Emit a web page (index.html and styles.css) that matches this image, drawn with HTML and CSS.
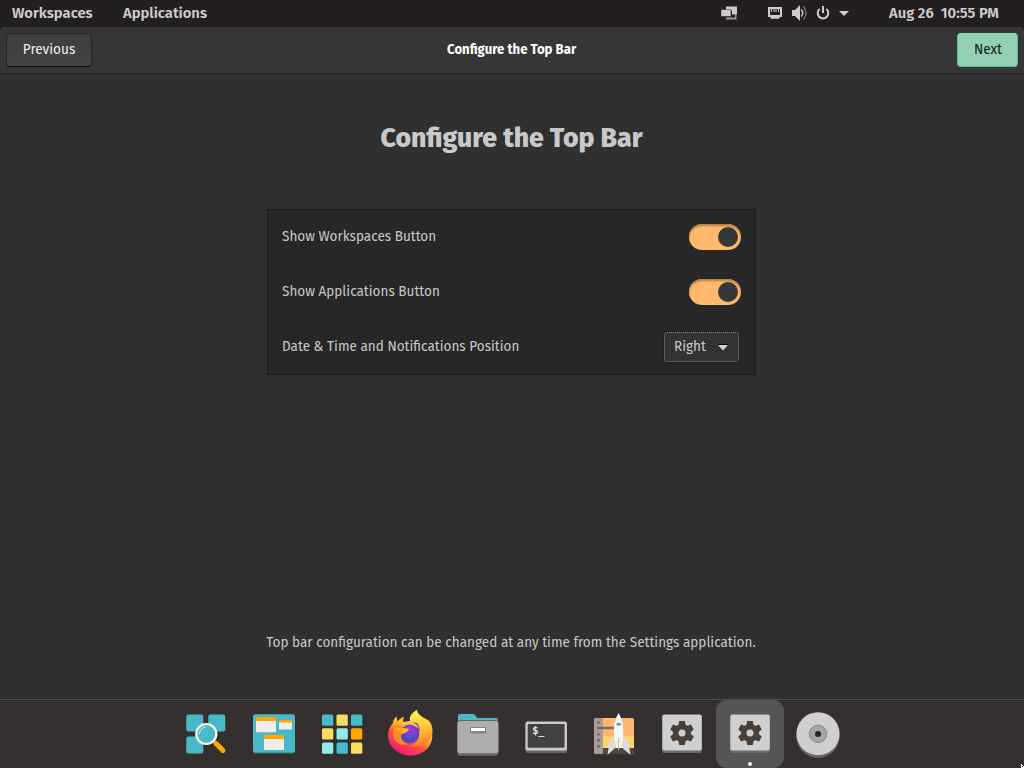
FILE: index.html
```
<!DOCTYPE html>
<html lang="en">
<head>
<meta charset="utf-8">
<title>Configure the Top Bar</title>
<link rel="stylesheet" href="styles.css">
</head>
<body>
<div class="desktop">
  <nav class="panel">
    <span class="panel-text workspaces">Workspaces</span>
    <span class="panel-text applications">Applications</span>
    <svg class="tray" width="136" height="27" viewBox="0 0 136 27">
      <g fill="#cfcccb">
        <path d="M6 6.500h11v8h-5v-4H6z"/>
        <path d="M1 9.500h10v7H1z" stroke="#231f20" stroke-width=".5"/>
        <path d="M6 17.500h9v-3h1.500v5H6z" fill="#9d9a99"/>
        <path fill-rule="evenodd" d="M48 7h14v10h-2.500v1.700h-9V17H48zM50 9v6h10V9h-1v3h-1V9h-1.500v3h-1V9h-1v3h-1V9H52v3h-1V9z"/>
        <path d="M72 10h3l5-5v16l-5-5h-3z"/>
        <path d="M81 8.500q5 4.500 0 9v-2q2-2.500 0-5z"/>
        <path d="M83.500 6.500q5 6.500 0 13" fill="none" stroke="#716e6e" stroke-width="1.500"/>
      </g>
      <path d="M99.700 9a5.300 5.300 0 1 0 6.600 0M103 6v7" fill="none" stroke="#cfcccb" stroke-width="2"/>
      <path d="M119 11h10l-5 5z" fill="#cfcccb"/>
    </svg>
    <span class="panel-text clock">Aug 26&nbsp; 10:55 PM</span>
  </nav>

  <div class="window">
    <header class="header">
      <button class="button previous"><span class="label">Previous</span></button>
      <span class="title">Configure the Top Bar</span>
      <button class="button next"><span class="label">Next</span></button>
    </header>
    <main class="content">
      <h1 class="heading">Configure the Top Bar</h1>
      <section class="settings">
        <div class="row"><span class="text">Show Workspaces Button</span><span class="switch"><i class="knob"></i></span></div>
        <div class="row"><span class="text">Show Applications Button</span><span class="switch"><i class="knob"></i></span></div>
        <div class="row"><span class="text">Date &amp; Time and Notifications Position</span>
          <span class="select"><span class="text">Right</span><svg width="10" height="7" viewBox="0 0 10 7"><path d="M0 1h10L5 6.500z" fill="#d0d0d0"/><path d="M0 .5h10" stroke="#050505"/></svg></span></div>
      </section>
      <p class="text note">Top bar configuration can be changed at any time from the Settings application.</p>
    </main>
  </div>

  <footer class="dock">
    <svg class="app" viewBox="0 0 68 68">
      <g fill="#48b9c7"><rect x="14.300" y="14.500" width="17" height="17" rx="2"/><rect x="36.300" y="14.500" width="17" height="17" rx="2"/><rect x="14.300" y="36.500" width="17" height="17" rx="2"/></g>
      <path d="M42 42l3 3" stroke="#fff" stroke-width="2"/>
      <path d="M44 43.500l7 7" stroke="#ffa600" stroke-width="5" stroke-linecap="round"/>
      <circle cx="34.300" cy="34" r="10" fill="#48b9c7" stroke="#fff" stroke-width="2.200"/>
      <path d="M27.500 34a7 7 0 0 1 6-7" fill="none" stroke="#d5f0f2" stroke-width="1"/>
    </svg>
    <svg class="app" viewBox="0 0 68 68">
      <rect x="13" y="15" width="42" height="38.500" rx="2.500" fill="#2b7d86"/><rect x="13" y="14.300" width="42" height="38.200" rx="2.500" fill="#48b9c7"/>
      <path d="M16 20h20v12.200H16zM39 21h13v8.500H39zM24 38h20v12H24z" fill="#eee"/>
      <path d="M16 18q0-1 1-1h18q1 0 1 1v3H16zM39 21q0-1 1-1h11q1 0 1 1v1.500H39zM24 36q0-1 1-1h18q1 0 1 1v3H24z" fill="#ffa600"/>
    </svg>
    <svg class="app" viewBox="0 0 68 68">
      <g fill="#48b9c7"><rect x="14" y="14.500" width="11.300" height="11.300" rx="1.500"/><rect x="43" y="14.500" width="11.300" height="11.300" rx="1.500"/><rect x="28.500" y="42.500" width="11.300" height="11.300" rx="1.500"/></g>
      <g fill="#f8dd64"><rect x="28.500" y="14.500" width="11.300" height="11.300" rx="1.500"/><rect x="14" y="28.300" width="11.300" height="11.300" rx="1.500"/><rect x="43" y="42.500" width="11.300" height="11.300" rx="1.500"/></g>
      <g fill="#94ebeb"><rect x="28.500" y="28.300" width="11.300" height="11.300" rx="1.500"/><rect x="14" y="42.500" width="11.300" height="11.300" rx="1.500"/></g>
      <rect x="43" y="28.300" width="11.300" height="11.300" rx="1.500" fill="#ffa600"/>
    </svg>
    <svg class="app" viewBox="0 0 68 68">
      <defs>
        <linearGradient id="flame" x1=".8" y1=".1" x2=".25" y2=".95"><stop offset="0" stop-color="#fff04f"/><stop offset=".38" stop-color="#ffb02c"/><stop offset=".62" stop-color="#ff5142"/><stop offset="1" stop-color="#ed1778"/></linearGradient>
        <linearGradient id="tail" x1=".5" y1="0" x2=".65" y2="1"><stop offset="0" stop-color="#fff350"/><stop offset=".5" stop-color="#ffc52f"/><stop offset="1" stop-color="#ff742f"/></linearGradient>
        <radialGradient id="globe" cx=".55" cy=".25"><stop offset="0" stop-color="#b331ca"/><stop offset=".5" stop-color="#7546e5"/><stop offset="1" stop-color="#5048bd"/></radialGradient>
      </defs>
      <path d="M17 23q0-4 3.600-6.500l.8 5q2.500-3 6.600-5-1.500 3.500-.5 5.500L44 19q12 5 12.300 17c-.5 12-10 19.500-22 19.500S12.500 47 12 36q0-8 5-13z" fill="url(#flame)"/>
      <path d="M41 9.700C31 16 33 22 38 24q6 4 5 13-2 8-9 9c16 2 24-7 22.300-18-1.800-9-5.800-8-9.800-11-4-3-5-4-5.500-7.300z" fill="url(#tail)"/>
      <circle cx="33.800" cy="34" r="9.500" fill="url(#globe)"/>
      <path d="M33 22q9 1 10 7-3-3-6-2 6 5 3 11 7-9 1-15z" fill="#7f37c8"/>
      <path d="M16 28q3-4 9-3l2 3 6 1q-1 4-7 5-2 3 0 6 2 4 7 4-10 3-15-5-2-5 0-11z" fill="#ff8b27"/>
      <path d="M18 29q5-2 15 0-1 3-7 4-4-3-8-4z" fill="#ffb531"/>
    </svg>
    <svg class="app" viewBox="0 0 68 68">
      <path d="M14 24v-8q0-2 2-2h13q2 0 4 4h19q2 0 2 3v4z" fill="#48b9c7"/>
      <rect x="13.400" y="25" width="41" height="30.700" rx="2.500" fill="#656565"/><rect x="13.400" y="20.300" width="41" height="33" rx="2.500" fill="#adadad"/>
      <path d="M14 22.500q0-2 2-2h36q2 0 2 2" fill="none" stroke="#4c5758" stroke-width=".8"/>
      <rect x="26" y="27" width="16" height="6.500" rx="1" fill="#858585"/><path d="M27 28h14v3H27z" fill="#fff"/>
    </svg>
    <svg class="app" viewBox="0 0 68 68">
      <rect x="13.500" y="23" width="41.500" height="30" rx="2" fill="#676767"/><rect x="13.500" y="21.500" width="41.500" height="29" rx="2" fill="#cbcbcb"/><rect x="15.700" y="24" width="36.900" height="23.700" rx="1" fill="#424242"/>
      <text class="prompt" x="20.300" y="34.300">$_</text>
    </svg>
    <svg class="app" viewBox="0 0 68 68">
      <clipPath id="card"><rect x="14" y="18" width="40" height="36" rx="2"/></clipPath>
      <g clip-path="url(#card)"><path d="M14 18h40v36H14z" fill="#ffb871"/><path d="M23 36q8 1 13 3 8-4 18-2v12H23z" fill="#f9d66c"/><path d="M23 48h31v6H23z" fill="#534542"/><path d="M14 18h9v36h-9z" fill="#a69b99"/></g>
      <path d="M17 28h18" stroke="#756865" stroke-width="2.500"/>
      <g fill="#706663"><circle cx="18.500" cy="22.300" r="1.500"/><circle cx="18.500" cy="34.300" r="1.500"/><circle cx="18.500" cy="40.300" r="1.500"/><circle cx="18.500" cy="46.300" r="1.500"/></g>
      <path d="M34.500 35l-5 6-2 14 7.500-7zM42.500 35l5.500 6 2.500 14-8-7z" fill="#dcdcdc"/>
      <path d="M38.600 13q-6 9-4.300 24l1.700 11h5.500L43 37q1.500-15-4.400-24z" fill="#f8f8f8"/>
      <path d="M36.500 23h4.300v2.500h-4.300z" fill="#36adbf"/><path d="M38.600 38v12" stroke="#bbb"/><path d="M36 42h5" stroke="#f5d781"/>
    </svg>
    <svg class="app" viewBox="0 0 68 68">
      <defs><g id="settings"><rect x="14.300" y="17" width="39.500" height="36" rx="2" fill="#6a6a6a"/><rect x="14.300" y="14.500" width="39.500" height="36" rx="2" fill="#cfcfcf"/>
        <g fill="#483f39"><circle cx="34" cy="33" r="9"/><path id="tooth" d="M31.200 21h5.600l1 5h-7.600zM31.200 45h5.600l1-5h-7.600z"/><use href="#tooth" transform="rotate(60 34 33)"/><use href="#tooth" transform="rotate(120 34 33)"/></g><circle cx="34" cy="33" r="3.500" fill="#cfcfcf"/></g></defs>
      <use href="#settings"/>
    </svg>
    <svg class="app active" viewBox="0 0 68 68"><use href="#settings"/><circle cx="34" cy="64" r="2" fill="#fff"/></svg>
    <svg class="app" viewBox="0 0 68 68"><circle cx="34" cy="36" r="21.800" fill="#676767"/><circle cx="34" cy="33.700" r="21.500" fill="#cfcfcf"/><circle cx="34" cy="33.900" r="8.800" fill="#a5a5a5" stroke="#777" stroke-width=".7"/><circle cx="34" cy="33.900" r="3" fill="#262626"/></svg>
    <svg class="cursor" width="4" height="4" viewBox="0 0 4 4"><path d="M0 0h1v1h1v1h1v1h1v1H0z" fill="#fff"/><path d="M1 2h1v1H1z" fill="#111"/></svg>
  </footer>
</div>
</body>
</html>
```
FILE: styles.css
```
* { box-sizing: border-box; }
body { margin: 0; width: 1024px; height: 768px; overflow: hidden; background: #231f20; color: #c9c9c9; font: 14.5px/20px "Fira Sans", "Noto Sans", "Open Sans", sans-serif; }
.desktop { position: relative; display: flex; flex-direction: column; width: 1024px; height: 768px; overflow: hidden; }
.panel { display: flex; align-items: center; height: 27px; padding: 0 25px 0 12px; background: #231f20; }
.panel-text { font-size: 14.8px; font-weight: 600; line-height: 24px; padding-bottom: 2px; white-space: nowrap; color: #cfcccb; }
.workspaces { width: 81px; }
.applications { margin-left: 30px; }
.tray { margin-left: auto; margin-right: 33px; flex: none; }
.clock { width: 110px; }
.window { height: 672px; display: flex; flex-direction: column; background: #303030; border-radius: 5px 5px 0 0; overflow: hidden; }
.header { display: grid; grid-template-columns: 1fr auto 1fr; align-items: center; height: 47px; flex: none; padding: 0 6px; background: #363636; border-bottom: 1px solid #222; }
.button { display: flex; align-items: center; justify-content: center; height: 34px; padding: 0; font: inherit; border-radius: 4px; white-space: nowrap; }
.label { padding-bottom: 2px; transform: scaleX(.935); }
.previous { width: 86px; justify-self: start; color: #efefef; background: linear-gradient(#3e3e3e, #434343); border: 1px solid #262626; border-bottom-color: #090909; }
.next { width: 61px; justify-self: end; color: #101613; background: #92d1b2; border: 1px solid #59c08b; border-top-color: #8be0b4; }
.title { color: #fff; font-size: 14px; font-weight: 700; white-space: nowrap; transform: scaleX(.94); }
.content { display: flex; flex-direction: column; align-items: center; flex: 1; }
.heading { margin: 45px 1px 0 0; font-size: 26.67px; line-height: 38px; font-weight: 800; white-space: nowrap; }
.settings { width: 489px; height: 166px; margin-top: 52px; margin-right: 1px; background: #272727; border: 1px solid #1c1c1c; }
.row { display: flex; align-items: center; justify-content: space-between; height: 55px; padding: 0 14px; border-bottom: 1px solid #222; }
.row:last-child { height: 54px; padding-right: 15px; border: 0; }
.text { padding-bottom: 2px; white-space: nowrap; transform: scaleX(.934); transform-origin: left; }
.switch { width: 52px; height: 26px; padding: 3px; border-radius: 13px; background: #ffb86c; box-shadow: inset 0 2px 2px #b47e49; display: flex; justify-content: flex-end; }
.knob { width: 20px; height: 20px; border-radius: 50%; background: #373737; }
.select { width: 77px; height: 32px; padding: 0 11px 0 10px; display: flex; align-items: center; justify-content: space-between; border-radius: 4px; background: #333; border: 1px solid #202020; outline: 1px dotted #858585; outline-offset: -2px; }
.note { margin: 257px 2px 0 0; transform-origin: center; }
.dock { position: relative; height: 69px; display: flex; justify-content: center; border-top: 1px solid #505050; background: #35302f; }
.app { width: 68px; height: 68px; flex: none; }
.prompt { font: 10px "DejaVu Sans Mono", monospace; fill: #fff; stroke: #fff; stroke-width: .2px; }
.active { background: #575554; border-radius: 11px; }
.cursor { position: absolute; right: -1px; bottom: 0; }
```
